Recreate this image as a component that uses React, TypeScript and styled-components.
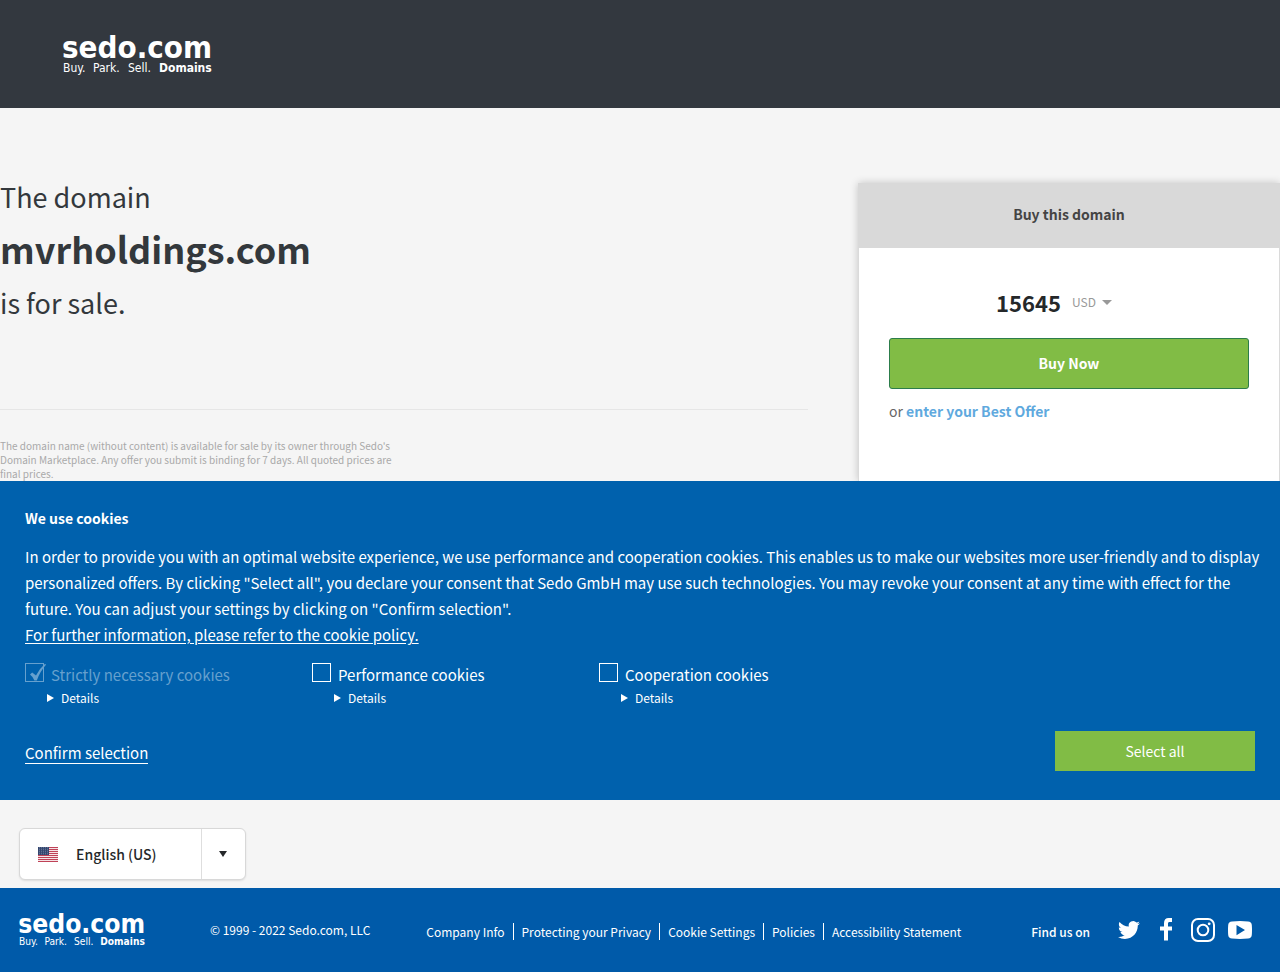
import React from "react";
import styled, { createGlobalStyle } from "styled-components";

const sans = `"Noto Sans CJK SC", "Noto Sans", sans-serif`;

const Global = createGlobalStyle`
  *, *::before, *::after { box-sizing: border-box; }
  body { margin: 0; background: #f5f5f5; color: #33383c; font-family: ${sans}; font-size: 15px; line-height: 26px; }
  button, select, input { font: inherit; margin: 0; }
  h1, h2, p { margin: 0; }
`;

const Page = styled.div`
  display: flex;
  flex-direction: column;
`;

const Header = styled.header`
  display: flex;
  align-items: center;
  height: 108px;
  padding: 0 63px;
  background: #33383f;
`;

const LogoLink = styled.a<{ $width: number }>`
  display: block;
  flex: none;
  width: ${(p) => p.$width}px;
  svg { display: block; width: 100%; height: auto; overflow: visible; }
`;

const Hero = styled.main`
  display: grid;
  grid-template-columns: minmax(0, 808px) minmax(0, 422px);
  justify-content: space-between;
  padding-top: 75px;
  overflow: hidden;
`;

const Intro = styled.section`
  display: flex;
  flex-direction: column;
`;

const Headline = styled.h1`
  padding-bottom: 92px;
  border-bottom: 1px solid #e6e6e6;
  font-size: 27px;
  font-weight: 400;
  line-height: 28px;
`;

const HeadlineLine = styled.span`
  display: block;
`;

const DomainName = styled.strong`
  display: block;
  padding: 18px 0 22px;
  font-size: 36px;
  font-weight: 700;
  line-height: 38px;
`;

const Disclaimer = styled.p`
  width: 400px;
  max-width: 100%;
  padding-top: 29px;
  color: #a9a9a9;
  font-size: 10px;
  line-height: 14px;
`;

const Card = styled.section`
  display: flex;
  flex-direction: column;
  background: #fff;
  border: 1px solid #dadada;
  border-width: 0 1px;
  box-shadow: 0 0 8px rgba(0, 0, 0, 0.2);
`;

const CardTitle = styled.h2`
  margin: 0 -1px;
  padding: 18px 19px 20px;
  background: #d9d9d9;
  color: #444;
  font-size: 14px;
  line-height: 27px;
  text-align: center;
`;

const CardBody = styled.div`
  padding: 39px 30px 0;
`;

const PriceRow = styled.div`
  display: flex;
  justify-content: center;
  align-items: center;
  gap: 11px;
  height: 30px;
  margin-bottom: 21px;
  padding-right: 30px;
`;

const Price = styled.strong`
  color: #25282a;
  font-size: 22px;
`;

const CurrencyField = styled.label`
  display: flex;
  align-items: center;
  gap: 5px;
  color: #999;
`;

const CurrencySelect = styled.select`
  appearance: none;
  width: 25px;
  padding: 0;
  border: 0;
  background: transparent;
  color: inherit;
  font-size: 12px;
`;

const Caret = styled.span<{ $w: number; $h: number }>`
  border: ${(p) => p.$w}px solid transparent;
  border-top: ${(p) => p.$h}px solid currentColor;
  border-bottom: 0;
  pointer-events: none;
`;

const BuyButton = styled.button`
  display: block;
  width: 100%;
  height: 51px;
  padding: 0 0 2px;
  border: 1px solid #2c7d4b;
  border-radius: 3px;
  background: #81bc45;
  color: #fff;
  font-size: 14px;
  font-weight: 700;
`;

const OfferLine = styled.p`
  padding-top: 9px;
  color: #666;
  font-size: 14px;
`;

const OfferLink = styled.a`
  color: #5fa9de;
  font-weight: 700;
  text-decoration: none;
`;

const Banner = styled.section`
  padding: 24px 25px 29px;
  background: #0061ad;
  color: #fff;
`;

const BannerTitle = styled.h2`
  margin-bottom: 13px;
  font-size: 14px;
  line-height: 26px;
`;

const BannerText = styled.p`
  margin-right: -10px;
  font-size: 15px;
  line-height: 26px;
  a { color: inherit; text-underline-offset: 2px; }
`;

const Choices = styled.div`
  display: flex;
  flex-wrap: wrap;
  padding-top: 15px;
`;

const Choice = styled.div`
  width: 287px;
`;

const ChoiceLabel = styled.label<{ $muted?: boolean }>`
  display: flex;
  align-items: flex-start;
  gap: 7px;
  height: 26px;
  color: ${(p) => (p.$muted ? "#66a0ce" : "#fff")};
  font-size: 15px;
  line-height: 24px;
`;

const Tick = styled.span`
  position: relative;
  display: block;
  width: 19px;
  height: 19px;
  svg { position: absolute; left: 4px; top: 0; width: 18px; height: 19px; pointer-events: none; }
`;

const Box = styled.input`
  display: block;
  appearance: none;
  width: 19px;
  height: 19px;
  border: 1px solid #fff;
  &:disabled { border-color: #66a0ce; }
`;

const Details = styled.details`
  padding-left: 22px;
  font-size: 12px;
  line-height: 18px;
`;

const Summary = styled.summary`
  display: flex;
  align-items: center;
  gap: 7px;
  list-style: none;
  cursor: pointer;
  &::before {
    content: "";
    border: 4px solid transparent;
    border-left: 7px solid #fff;
    border-right: 0;
  }
`;

const Actions = styled.div`
  display: flex;
  justify-content: space-between;
  align-items: flex-end;
  padding-top: 24px;
`;

const ConfirmButton = styled.button`
  margin-bottom: 7px;
  padding: 0;
  border: 0;
  border-bottom: 1px solid #fff;
  background: none;
  color: #fff;
  line-height: 20px;
`;

const SelectAllButton = styled.button`
  width: 200px;
  height: 40px;
  padding: 0;
  border: 0;
  background: #81bc45;
  color: #fff;
  font-size: 14px;
`;

const LanguageBar = styled.section`
  padding: 28px 19px 8px;
`;

const LanguageBox = styled.label`
  display: flex;
  align-items: center;
  width: 227px;
  height: 52px;
  border: 1px solid #d8d8d8;
  border-radius: 6px;
  background: #fff;
  box-shadow: 0 1px 2px rgba(0, 0, 0, 0.1);
  color: #25282a;
  > svg { flex: none; margin: 0 18px; }
`;

const LanguageSelect = styled.select`
  appearance: none;
  flex: 1;
  min-width: 0;
  height: 100%;
  padding: 0;
  border: 0;
  background: transparent;
  color: inherit;
  font-size: 14px;
  font-weight: 500;
`;

const LanguageArrow = styled.span`
  display: flex;
  align-items: center;
  justify-content: center;
  width: 44px;
  height: 100%;
  padding-right: 1px;
  border-left: 1px solid #dedede;
  pointer-events: none;
`;

const Footer = styled.footer`
  display: flex;
  align-items: center;
  height: 84px;
  padding: 0 28px 0 19px;
  background: #005aa9;
  color: #fff;
  font-size: 12px;
`;

const Copyright = styled.p`
  margin-left: 64px;
  white-space: nowrap;
`;

const FooterNav = styled.nav`
  display: flex;
  margin: 3px auto 0 48px;
  a {
    padding: 0 8px;
    color: inherit;
    line-height: 17px;
    text-decoration: none;
    white-space: nowrap;
  }
  a + a { border-left: 1px solid #fff; }
`;

const Social = styled.div`
  display: flex;
  align-items: center;
  strong { margin: 3px 28px 0 0; font-weight: 500; white-space: nowrap; }
`;

const SocialLink = styled.a<{ $gap?: number }>`
  display: block;
  margin-left: ${(p) => p.$gap ?? 0}px;
  color: inherit;
  svg { display: block; }
`;

function Logo({ width }: { width: number }) {
  return (
    <LogoLink href="#" $width={width} aria-label="sedo.com">
      <svg
        viewBox="0 0 150 40"
        fill="#fff"
        fontFamily="'DejaVu Sans Condensed', 'DejaVu Sans', sans-serif"
      >
        <text x="-1" y="24" fontSize="31" fontWeight="700">sedo.com</text>
        <g fontSize="12">
          <text x="0" y="38">Buy.</text>
          <text x="30" y="38">Park.</text>
          <text x="65" y="38">Sell.</text>
          <text x="96" y="38" fontWeight="700">Domains</text>
        </g>
      </svg>
    </LogoLink>
  );
}

function Flag() {
  return (
    <svg width="20" height="16" viewBox="0 -1 20 16" aria-hidden="true">
      <rect width="20" height="15" fill="#f6e3e6" />
      {[0, 2, 4, 6, 8, 10, 12, 14].map((y) => (
        <rect key={y} y={y} width="20" height="1" fill="#bf4257" />
      ))}
      <rect width="11" height="8" fill="#33466f" />
      {[1, 3, 5, 7].map((y) =>
        [1, 3, 5, 7, 9].map((x) => (
          <rect key={`${x}-${y}`} x={x} y={y - 0.5} width="0.7" height="0.7" fill="#b4bfd4" />
        ))
      )}
    </svg>
  );
}

const choices = [
  { id: "necessary", label: "Strictly necessary cookies", fixed: true },
  { id: "performance", label: "Performance cookies", fixed: false },
  { id: "cooperation", label: "Cooperation cookies", fixed: false },
];

const footerLinks = [
  "Company Info",
  "Protecting your Privacy",
  "Cookie Settings",
  "Policies",
  "Accessibility Statement",
];

export default function App() {
  return (
    <Page>
      <Global />
      <Header>
        <Logo width={150} />
      </Header>

      <Hero>
        <Intro>
          <Headline>
            <HeadlineLine>The domain</HeadlineLine>
            <DomainName>mvrholdings.com</DomainName>
            <HeadlineLine>is for sale.</HeadlineLine>
          </Headline>
          <Disclaimer>
            The domain name (without content) is available for sale by its owner through Sedo's
            Domain Marketplace. Any offer you submit is binding for 7 days. All quoted prices are
            final prices.
          </Disclaimer>
        </Intro>
        <Card>
          <CardTitle>Buy this domain</CardTitle>
          <CardBody>
            <PriceRow>
              <Price>15645</Price>
              <CurrencyField>
                <CurrencySelect aria-label="Currency">
                  <option>USD</option>
                </CurrencySelect>
                <Caret $w={5} $h={5} />
              </CurrencyField>
            </PriceRow>
            <BuyButton>Buy Now</BuyButton>
            <OfferLine>
              or <OfferLink href="#">enter your Best Offer</OfferLink>
            </OfferLine>
          </CardBody>
        </Card>
      </Hero>

      <Banner>
        <BannerTitle>We use cookies</BannerTitle>
        <BannerText>
          In order to provide you with an optimal website experience, we use performance and
          cooperation cookies. This enables us to make our websites more user-friendly and to
          display personalized offers. By clicking "Select all", you declare your consent that Sedo
          GmbH may use such technologies. You may revoke your consent at any time with effect for
          the future. You can adjust your settings by clicking on "Confirm selection".
          <br />
          <a href="#">For further information, please refer to the cookie policy.</a>
        </BannerText>
        <Choices>
          {choices.map((c) => (
            <Choice key={c.id}>
              <ChoiceLabel htmlFor={c.id} $muted={c.fixed}>
                <Tick>
                  <Box type="checkbox" id={c.id} defaultChecked={c.fixed} disabled={c.fixed} />
                  {c.fixed && (
                    <svg viewBox="0 0 18 19" aria-hidden="true">
                      <path d="M1 11.5 3.2 9.6 7 12.6 Q10 6 15.8 1 L17.2 1.6 Q11 8.500 7.800 17.500 L5.400 17.500 Q3.800 13.500 1 11.500Z" fill="#66a0ce" />
                    </svg>
                  )}
                </Tick>
                {c.label}
              </ChoiceLabel>
              <Details>
                <Summary>Details</Summary>
              </Details>
            </Choice>
          ))}
        </Choices>
        <Actions>
          <ConfirmButton>Confirm selection</ConfirmButton>
          <SelectAllButton>Select all</SelectAllButton>
        </Actions>
      </Banner>

      <LanguageBar>
        <LanguageBox>
          <Flag />
          <LanguageSelect aria-label="Language">
            <option>English (US)</option>
          </LanguageSelect>
          <LanguageArrow>
            <Caret $w={4} $h={6} />
          </LanguageArrow>
        </LanguageBox>
      </LanguageBar>

      <Footer>
        <Logo width={127} />
        <Copyright>© 1999 - 2022 Sedo.com, LLC</Copyright>
        <FooterNav>
          {footerLinks.map((l) => (
            <a key={l} href="#">{l}</a>
          ))}
        </FooterNav>
        <Social>
          <strong>Find us on</strong>
          <SocialLink href="#" aria-label="Twitter">
            <svg width="22" height="24" viewBox="0 0 24 24" fill="#fff">
              <path d="M23.950 4.570a10 10 0 0 1-2.820.770 4.960 4.960 0 0 0 2.160-2.720c-.950.550-2.010.960-3.130 1.180a4.920 4.920 0 0 0-8.380 4.480C7.690 8.100 4.070 6.130 1.640 3.160a4.820 4.820 0 0 0-.670 2.480c0 1.710.870 3.210 2.190 4.100a4.900 4.900 0 0 1-2.230-.620v.060a4.920 4.920 0 0 0 3.950 4.830 5 5 0 0 1-2.210.080 4.940 4.940 0 0 0 4.600 3.420A9.870 9.870 0 0 1 0 19.540a13.990 13.990 0 0 0 7.560 2.210c9.050 0 14-7.500 14-13.980 0-.210 0-.420-.020-.630a9.940 9.940 0 0 0 2.460-2.550z" />
            </svg>
          </SocialLink>
          <SocialLink href="#" aria-label="Facebook" $gap={20}>
            <svg width="12" height="24" viewBox="0 0 12 24" fill="#fff">
              <path d="M12 0v4H9.800C8.400 4 8 4.600 8 5.800V8.500h4v4H8V22.500H4v-10H0v-4h4V5.300C4 1.900 5.800 0 8.600 0z" />
            </svg>
          </SocialLink>
          <SocialLink href="#" aria-label="Instagram" $gap={19}>
            <svg width="24" height="24" viewBox="0 0 24 24" fill="none" stroke="#fff" strokeWidth="2">
              <rect x="1" y="1" width="22" height="22" rx="6" />
              <circle cx="12" cy="12" r="5.300" />
              <circle cx="18.200" cy="5.800" r="1.400" fill="#fff" stroke="none" />
            </svg>
          </SocialLink>
          <SocialLink href="#" aria-label="YouTube" $gap={13}>
            <svg width="24" height="24" viewBox="0 0 24 24" fill="#fff">
              <path fillRule="evenodd" d="M4 3.500Q12 2.700 20 3.500 23.500 3.800 23.800 7 24.200 12 23.800 17 23.500 20.200 20 20.500 12 21.300 4 20.500 .500 20.200 .200 17 -.200 12 .200 7 .500 3.800 4 3.500ZM8.500 7v10.200L17 12Z" />
            </svg>
          </SocialLink>
        </Social>
      </Footer>
    </Page>
  );
}
